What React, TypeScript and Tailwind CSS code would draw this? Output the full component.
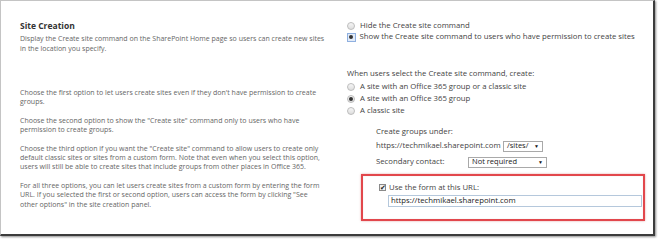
import React from "react";

const font = { fontFamily: '"Open Sans", "Noto Sans", sans-serif' };

function Radio({ checked = false }: { checked?: boolean }) {
  return (
    <span className="w-[8px] h-[8px] rounded-full border border-[#bdbdbd] bg-gradient-to-b from-[#f6f6f6] to-[#dedede] flex items-center justify-center shrink-0">
      {checked && <span className="w-[4px] h-[4px] rounded-full bg-[#333]" />}
    </span>
  );
}

function FocusRadio() {
  return (
    <span className="w-[9px] h-[9px] border border-[#8fb0e0] bg-[#e2ebf8] flex items-center justify-center shrink-0">
      <span className="w-[4px] h-[4px] rounded-full bg-[#333]" />
    </span>
  );
}

function Select({ w, label }: { w: string; label: string }) {
  return (
    <span className={`${w} h-[11px] border border-[#a9a9a9] bg-white flex items-center justify-between pl-[3px] pr-[3px] text-[#222] text-[7.5px] leading-none shrink-0`}>
      <span>{label}</span>
      <span className="text-[5px] text-[#111]">▼</span>
    </span>
  );
}

export default function App() {
  return (
    <div className="w-[660px] h-[240px] bg-white" style={font}>
      <div className="w-[655px] h-[236px] border-t border-l border-[#c4c4c4] border-r-[2px] border-b-[2px] border-r-[#3c3c3c] border-b-[#3c3c3c] shadow-[1px_1px_2px_rgba(0,0,0,0.45)] flex">
        {/* left column */}
        <div className="w-[345px] shrink-0 pl-[19px] flex flex-col text-[#666] text-[7px]">
          <div className="mt-[18px] text-[8.5px] leading-[13px] font-bold text-[#333]">Site Creation</div>
          <div className="mt-[2px] leading-[10px] whitespace-nowrap">
            <div>Display the Create site command on the SharePoint Home page so users can create new sites</div>
            <div>in the location you specify.</div>
          </div>
          <div className="mt-[34px] leading-[9.4px] whitespace-nowrap">
            <div>Choose the first option to let users create sites even if they don't have permission to create</div>
            <div>groups.</div>
          </div>
          <div className="mt-[9px] leading-[9.4px] whitespace-nowrap">
            <div>Choose the second option to show the "Create site" command only to users who have</div>
            <div>permission to create groups.</div>
          </div>
          <div className="mt-[9px] leading-[9.4px] whitespace-nowrap">
            <div>Choose the third option if you want the "Create site" command to allow users to create only</div>
            <div>default classic sites or sites from a custom form. Note that even when you select this option,</div>
            <div>users will still be able to create sites that include groups from other places in Office 365.</div>
          </div>
          <div className="mt-[9px] leading-[9.4px] whitespace-nowrap">
            <div>For all three options, you can let users create sites from a custom form by entering the form</div>
            <div>URL. If you selected the first or second option, users can access the form by clicking "See</div>
            <div>other options" in the site creation panel.</div>
          </div>
        </div>

        {/* right column */}
        <div className="flex-1 flex flex-col text-[#444] text-[7.75px] pl-[1px] whitespace-nowrap">
          <div className="mt-[19px] flex items-center gap-[5px] h-[12px]">
            <Radio />
            <span>Hide the Create site command</span>
          </div>
          <div className="mt-[-1px] flex items-center gap-[4px] h-[12px] -ml-[0.5px]">
            <FocusRadio />
            <span>Show the Create site command to users who have permission to create sites</span>
          </div>
          <div className="mt-[25px] h-[12px] flex items-center">When users select the Create site command, create:</div>
          <div className="mt-[1px] flex flex-col">
            <div className="flex items-center gap-[5px] h-[12px]">
              <Radio />
              <span>A site with an Office 365 group or a classic site</span>
            </div>
            <div className="flex items-center gap-[5px] h-[12px]">
              <Radio checked />
              <span>A site with an Office 365 group</span>
            </div>
            <div className="flex items-center gap-[5px] h-[12px]">
              <Radio />
              <span>A classic site</span>
            </div>
          </div>
          <div className="ml-[29px] mt-[9px] flex flex-col">
            <div className="h-[12px] flex items-center">Create groups under:</div>
            <div className="mt-[2px] h-[12px] flex items-center gap-[3px]">
              <span className="w-[124px]">https://techmikael.sharepoint.com</span>
              <Select w="w-[40px]" label="/sites/" />
            </div>
            <div className="mt-[4px] h-[12px] flex items-center">
              <span className="w-[92px]">Secondary contact:</span>
              <Select w="w-[79px]" label="Not required" />
            </div>
          </div>
          <div className="ml-[14px] mt-[6px] w-[284px] h-[47px] border-2 border-[#e2474c] shadow-[0_0_2px_rgba(200,80,80,0.5),inset_0_0_1px_rgba(0,0,0,0.2)] pl-[16px] pt-[6px] flex flex-col">
            <div className="flex items-center gap-[3px] h-[11px]">
              <span className="w-[7px] h-[7px] border border-[#8a8a8a] bg-[#f0f0f0] flex items-center justify-center text-[7px] leading-none text-[#222]">✔</span>
              <span>Use the form at this URL:</span>
            </div>
            <div className="ml-[9px] mt-[2px] w-[254px] h-[12px] border border-[#b5c8dc] flex items-center pl-[2px] text-[7.75px] text-[#222]">
              https://techmikael.sharepoint.com
            </div>
          </div>
        </div>
      </div>
    </div>
  );
}
